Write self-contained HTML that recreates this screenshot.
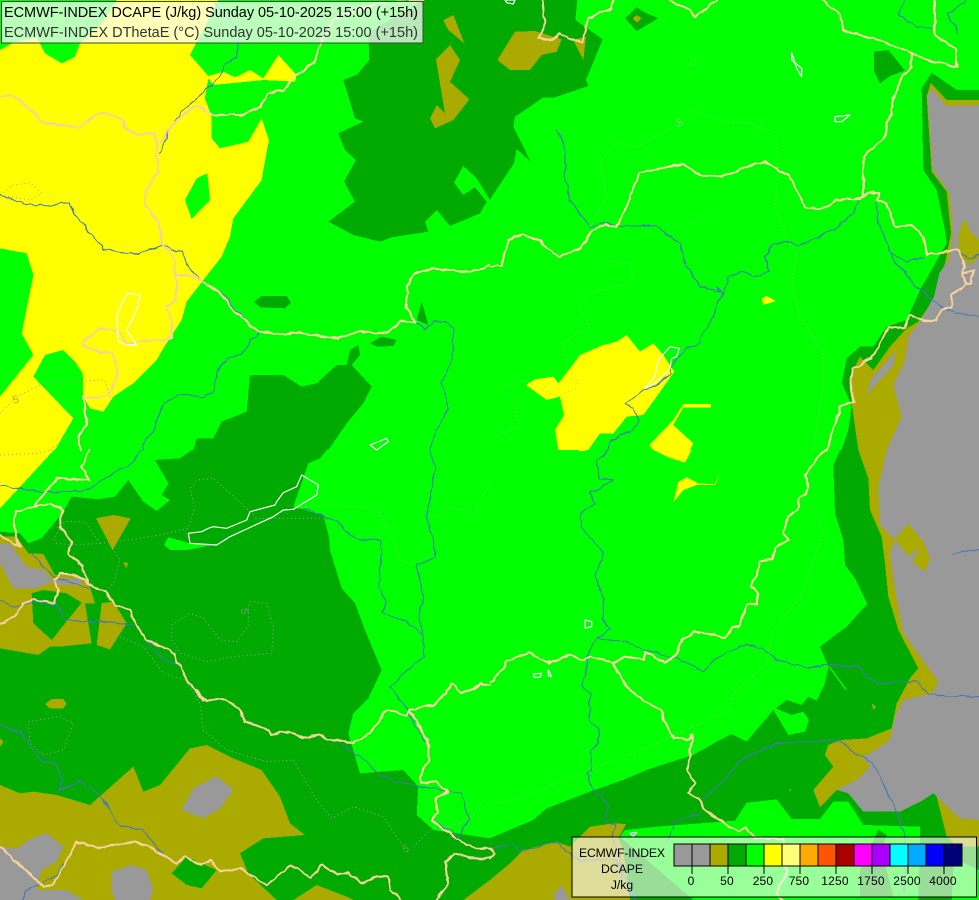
<!DOCTYPE html>
<html><head><meta charset="utf-8"><style>
html,body{margin:0;padding:0;background:#0f0;width:979px;height:900px;overflow:hidden}
svg{display:block}
.f *{shape-rendering:crispEdges}
.Y{fill:#ff0}.D{fill:#0a0}.O{fill:#aa0}.G{fill:#999}.B{fill:#0f0}
.b,.r{filter:url(#wig)}
.b polyline{fill:none;stroke:#f7d39c;stroke-width:6.2;stroke-linejoin:round;stroke-linecap:round}
.r polyline{fill:none;stroke:#4477bb;stroke-width:3.2;stroke-linejoin:round}
.c polyline{fill:none;stroke:#b98fc0;stroke-width:3;stroke-dasharray:3 9}
.c2 polyline{fill:none;stroke:#9ad68f;stroke-width:3;stroke-dasharray:3 9}
.w polygon{fill:none;stroke:#fff;stroke-width:3.6;stroke-linejoin:round}
text{font-family:"Liberation Sans",sans-serif}
</style></head><body>
<svg width="979" height="900" viewBox="0 0 979 900" xmlns="http://www.w3.org/2000/svg">
<defs>
<filter id="wig" filterUnits="userSpaceOnUse" x="-20" y="-20" width="1510" height="1390">
<feTurbulence type="fractalNoise" baseFrequency=".035" numOctaves="2" seed="4" result="n"/>
<feDisplacementMap in="SourceGraphic" in2="n" scale="14" xChannelSelector="R" yChannelSelector="G"/>
</filter>
</defs>
<rect width="979" height="900" fill="#0f0"/>

<!-- TOP LEFT -->
<g transform="scale(.33333)">
<g class="f">
<polygon class="Y" points="0,150 40,128 110,112 120,130 135,160 185,190 225,170 240,130 310,65 350,0 655,0 620,70 570,165 625,228 670,215 705,232 750,210 790,235 835,165 890,225 885,245 790,240 640,255 625,235 615,295 635,350 635,415 660,445 745,425 785,355 807,420 790,510 785,540 700,655 690,710 665,770 610,840 560,905 545,960 490,1045 470,1080 400,1150 340,1190 310,1235 270,1225 250,1190 248,1120 225,1085 190,1050 135,1065 100,1130 220,1255 165,1350 0,1350 0,1190 100,1065 65,1000 100,825 80,760 0,745"/>
<polygon class="B" points="555,600 590,535 622,520 630,600 575,657"/>
<polygon class="D" points="1270,0 1105,100 1108,180 1070,225 1030,240 1065,355 1090,365 1015,400 1035,450 1068,480 1032,545 1065,605 985,665 1060,705 1140,725 1175,712 1285,695 1275,665 1310,630 1350,678 1440,640 1460,605 1425,562 1390,585 1362,548 1390,498 1430,535 1470,600 1470,0"/>
<polygon class="O" points="1330,60 1360,45 1393,130 1345,90"/>
<polygon class="O" points="1308,178 1350,135 1380,180 1350,245 1408,298 1360,360 1305,385 1290,355 1310,315 1335,340"/>
<polygon class="D" points="762,905 785,888 860,888 873,908 855,925 780,922"/>
<polygon class="D" points="1110,1030 1145,1010 1190,1020 1180,1038 1130,1040"/>
<polygon class="D" points="1265,905 1285,975 1250,960"/>
<polygon class="D" points="580,1350 590,1315 640,1315 665,1265 740,1235 750,1127 765,1125 850,1125 905,1160 950,1150 1010,1095 1040,1095 1050,1050 1075,1035 1080,1065 1055,1095 1115,1160 1090,1210 1040,1270 985,1350"/>
</g>
<g class="c"><polyline points="0,585 40,555 90,548 125,580 90,600 0,585"/><polyline points="0,1240 50,1190 130,1150 315,1140 335,1210 320,1225"/><polyline points="150,1350 200,1310 240,1305"/></g>
<g class="r">
<polyline points="0,585 40,600 70,612 125,615 210,610 230,650 270,700 310,745 350,755 415,762 485,735 520,752 550,755 560,795 595,830 605,845 660,875 700,920 730,955 780,1000 760,1015 720,1065 680,1075 650,1120 640,1175 610,1190 540,1185 490,1210 465,1285 430,1330 428,1350"/>
<polyline points="480,460 510,385 545,335 590,295 660,230 675,190 710,170 718,110 690,60 640,5"/>
<polyline points="1200,965 1250,965 1275,990 1300,965 1340,965 1360,990 1355,1080 1325,1150 1345,1225 1310,1290 1290,1350"/>
</g>
<g class="b">
<polyline points="0,290 40,285 80,320 135,370 240,380 285,345 320,340 370,360 375,385 415,405 465,400 475,520 440,565 435,615 475,670 490,740 520,765 525,825 590,830 605,845 650,870 680,905 725,955 780,995 850,1005 880,998 1015,1013 1080,995 1160,1000 1200,965 1250,965 1220,925 1222,860 1240,822 1290,805 1410,815 1470,798"/>
<polyline points="525,825 530,850 525,905 495,920 515,960 515,1015 430,1022 380,1030 355,990 300,985 250,1025 250,1040 340,1065 355,1110 330,1185 285,1195 250,1190 260,1270 235,1310 245,1350"/>
<polyline points="480,430 520,370 590,315 640,345 720,345 780,320 800,285 850,270 890,225 945,185 955,140 1000,60 1040,40 1140,10 1270,0"/>
</g>
<g class="w"><polygon points="1110,1335 1160,1315 1165,1325 1130,1350"/><polygon points="385,880 420,885 410,930 380,990 410,1035 380,1035 355,1025 350,950 370,900"/></g>
</g>

<!-- TOP RIGHT -->
<g transform="translate(490,0) scale(.33333)">
<g class="f">
<polygon class="D" points="0,0 262,0 256,60 338,118 288,240 295,258 195,292 160,292 120,320 75,350 70,380 122,485 80,447 72,490 0,598"/>
<polygon class="O" points="22,180 75,95 135,93 215,118 200,155 155,165 120,210 60,210"/>
<polygon class="O" points="250,120 288,110 280,180"/>
<polygon class="D" points="405,55 440,22 470,40 505,55 440,93"/>
<polygon class="O" points="428,55 440,45 455,55 440,68"/>
<polygon class="D" points="1152,155 1195,150 1245,212 1200,228 1170,250 1152,215"/>
<polygon class="D" points="1470,270 1400,270 1325,218 1295,265 1300,510 1340,570 1365,690 1370,730 1290,870 1250,960 1190,980 1150,1040 1110,1040 1070,1075 1055,1150 1085,1215 1075,1290 1055,1350 1470,1350"/>
<polygon class="O" points="1470,300 1370,300 1322,248 1310,290 1325,515 1370,575 1383,700 1365,790 1335,890 1285,965 1250,985 1200,1040 1150,1110 1110,1070 1080,1130 1085,1210 1105,1350 1470,1350"/>
<polygon class="G" points="1470,315 1370,318 1325,265 1312,290 1328,510 1378,580 1388,700 1378,775 1348,820 1332,890 1290,965 1255,1010 1245,1080 1210,1155 1235,1250 1190,1350 1470,1350"/>
<polygon class="O" points="1425,655 1440,695 1470,720 1470,770 1440,795 1405,760 1405,700"/>
<polygon class="O" points="1255,1010 1245,1080 1210,1155 1235,1250 1190,1350 1105,1350 1085,1210 1128,1185 1180,1130 1215,1055"/>
<polygon class="G" points="1215,1055 1210,1100 1180,1130 1128,1185 1145,1135"/>
<polygon class="Y" points="108,1155 135,1138 190,1130 205,1150 240,1105 270,1065 340,1035 380,1025 410,1005 450,1055 490,1030 520,1065 553,1115 500,1190 460,1245 410,1250 370,1300 330,1300 295,1350 205,1350 195,1290 222,1245 210,1190 170,1200"/>
<polygon class="Y" points="478,1335 550,1260 580,1212 663,1212 663,1222 580,1222 550,1275 610,1330 600,1350 490,1350"/>
<polygon class="Y" points="815,895 830,888 858,903 820,915"/>
</g>
<g class="c2">
<polyline points="570,370 440,440 380,425 330,490 350,590 300,680"/>
<polyline points="600,330 700,365 780,370 855,395 865,480 855,630 920,770 905,850 930,950 1000,1060 1000,1150 970,1350"/>
<polyline points="330,780 420,790 430,850 290,880 270,920 300,980 215,1030 235,1100"/>
<polyline points="40,1170 100,1140 200,1190 270,1160 240,1110"/>
<polyline points="70,1200 90,1280 0,1315"/>
<polyline points="590,170 620,175 610,200 590,190"/>
<polyline points="605,670 670,650"/>
</g>
<g class="r">
<polyline points="200,390 225,440 225,540 240,600 300,680 340,668 390,678 495,678 570,730 580,780 630,860 690,875 680,860 700,880 715,830 760,815 795,830 835,815 825,770 845,735 900,725 925,740 1030,690 1090,640 1105,600"/>
<polyline points="700,880 680,905 670,950 640,1000 630,1030 590,1045 545,1100 540,1120 495,1160 460,1170 405,1212 430,1225 445,1270 420,1300 390,1300 360,1330 355,1350"/>
<polyline points="1160,610 1165,670 1190,725 1210,780 1290,870 1355,920 1400,940 1470,950"/>
<polyline points="1205,760 1250,785 1300,770"/>
<polyline points="1405,760 1440,775 1470,765"/>
<polyline points="1240,0 1225,45 1280,80 1330,85"/>
<polyline points="1430,0 1375,40 1380,65 1400,80 1397,100"/>
</g>
<g class="b">
<polyline points="0,800 35,795 55,720 95,705 150,720 170,745 210,770 270,745 305,695 345,675 375,680 410,620 445,520 580,490 630,525 690,530 740,515 775,498 825,485 900,530 945,620 990,628 1040,600 1110,597 1140,575 1165,580 1160,600 1190,610 1215,680 1265,675 1300,710 1310,765 1400,750 1425,800 1415,825 1430,850 1385,885 1385,920 1355,930 1340,960 1300,965 1260,945 1245,985 1195,980 1145,1075 1090,1105 1080,1150 1090,1205 1050,1220 1020,1320 1010,1350"/>
<polyline points="1120,590 1120,470 1190,405 1190,365 1205,340 1210,290 1240,225 1265,200 1265,160 1330,185 1400,200 1395,145 1335,105 1335,0"/>
<polyline points="1265,160 1190,130 1130,110 1060,90 1050,45 1000,0"/>
<polyline points="370,0 365,25 295,55 275,130 210,100 190,120 145,115 165,70 155,0"/>
<polyline points="540,0 600,30 615,50 680,0"/>
<polyline points="1430,850 1445,850 1450,810 1420,820"/>
</g>
<g class="w">
<polygon points="905,158 905,180 935,205 935,230 920,205"/>
<polygon points="1035,350 1080,345 1055,365 1035,365"/>
<polygon points="45,0 75,0 70,12 50,8"/>
<polygon points="540,1040 568,1045 560,1070 545,1075 540,1105 495,1150 465,1165 495,1130 505,1080"/>
</g>
</g>

<!-- BOTTOM LEFT -->
<g transform="translate(0,450) scale(.33333)">
<g class="f">
<polygon class="Y" points="0,0 162,0 70,100 0,175"/>
<polygon class="D" points="575,0 540,25 465,30 505,100 485,135 510,150 470,183 430,155 385,90 345,140 295,148 215,140 190,185 125,265 85,280 60,250 0,245 0,1350 1470,1350 1470,1165 1300,1140 1250,1095 1255,1010 1210,960 1080,970 1045,850 1060,790 1105,745 1145,660 1095,540 1065,460 1025,415 990,300 987,260 970,195 880,170 925,40 960,25 980,0"/>
<polygon class="B" points="492,285 505,262 570,280 640,285 560,300 510,300"/>
<polygon class="O" points="0,260 50,260 85,310 130,312 165,375 230,375 265,395 285,460 255,460 275,580 180,590 150,590 115,615 0,595"/>
<polygon class="D" points="95,430 130,420 200,430 245,458 155,570 100,520"/>
<polygon class="O" points="305,460 340,455 380,520 330,598 290,585"/>
<polygon class="O" points="288,205 340,195 392,205 338,300"/>
<polygon class="O" points="370,335 385,340 378,355"/>
<polygon class="O" points="135,762 155,747 190,747 200,762 190,775 150,775"/>
<polygon class="O" points="0,865 10,875 0,890"/>
<polygon class="G" points="0,280 30,280 80,350 130,360 160,395 110,415 40,415 0,340"/>
<polygon class="G" points="160,385 245,385 245,405 160,405"/>
<polygon class="O" points="0,1005 60,1030 100,1025 170,1035 270,1065 400,950 430,1025 480,1005 570,895 620,885 700,925 785,960 840,1040 870,1120 915,1155 790,1165 720,1210 745,1270 830,1350 0,1350"/>
<polygon class="D" points="515,1270 560,1220 650,1260 605,1315 560,1305"/>
<polygon class="G" points="545,1080 580,1015 650,978 700,1020 660,1075 610,1105"/>
<polygon class="G" points="0,1190 50,1195 95,1165 140,1150 190,1190 170,1235 125,1260 110,1320 200,1320 250,1350 0,1350"/>
<polygon class="G" points="335,1265 395,1245 440,1260 460,1320 450,1350 345,1350 335,1320"/>
<polygon class="O" points="880,1350 950,1305 1040,1340 1060,1350"/>
<polygon class="O" points="1390,1350 1470,1290 1470,1350"/>
</g>
<g class="c">
<polyline points="0,15 110,10 160,0"/>
<polyline points="170,280 160,265 195,215 255,215 300,280 220,285 170,280"/>
<polyline points="300,280 380,270 480,255 565,235 585,170 570,120 590,90 640,85 740,175 770,205 880,205 960,205"/>
<polyline points="330,285 360,330 340,400 320,420"/>
<polyline points="750,455 800,460 820,530 815,610 700,620 620,635 540,610 515,570 515,525 570,490 610,505 660,570 710,575 745,530 745,470 750,455"/>
<polyline points="85,815 180,800 220,820 190,900 130,915 90,880 85,815"/>
<polyline points="360,560 430,590 490,670 555,690 600,760 610,840 680,900 800,935 880,930 950,1050 995,1105 1060,1070 1150,1100 1210,1190"/>
<polyline points="1240,1190 1290,1140 1380,1120"/>
</g>
<g class="c2">
<polyline points="880,175 985,165 1130,175 1180,270 1200,330 1245,345"/>
<polyline points="1300,200 1350,170 1420,190 1470,100"/>
<polyline points="1380,1120 1470,1060"/>
</g>
<g class="r">
<polyline points="1290,0 1305,55 1280,200 1305,285 1305,320 1250,345 1270,440 1255,500 1270,550 1270,620 1170,710 1220,775 1240,820 1285,880"/>
<polyline points="425,0 400,35 340,70 260,120 130,128 0,105"/>
<polyline points="910,175 1015,215 1050,255 1085,272 1140,270 1145,310 1135,410 1160,450 1145,487 1220,515 1270,555"/>
<polyline points="0,450 35,470 105,455 170,465 195,510 270,515 330,515 410,525"/>
<polyline points="95,310 160,380 270,415"/>
<polyline points="440,570 480,620 530,645"/>
<polyline points="0,822 60,850 125,930 170,945 185,990 180,1020 240,995 300,1035 360,1130 430,1140 470,1190 500,1225 530,1240"/>
<polyline points="190,1240 170,1275 80,1320 70,1350"/>
<polyline points="1020,880 1085,925 1140,975 1190,995 1330,1020 1385,1030 1405,1110 1380,1160 1290,1105"/>
</g>
<g class="b">
<polyline points="0,520 40,500 70,460 100,450 165,458 175,420 160,390 180,370 230,375 270,405 320,425 345,465 390,480 410,530 440,568 525,610 530,640 545,650 560,690 600,740 620,755 640,745 690,755 720,780 735,815 795,835 815,858 840,847 870,847 910,862 960,855 1000,872 1040,872 1060,880 1110,850 1160,778 1220,795 1225,780 1300,765 1335,735 1355,700 1380,725 1420,720 1440,700 1470,705"/>
<polyline points="270,0 245,50 268,90 170,85 100,170 45,185 40,235 60,290"/>
<polyline points="100,170 150,160 190,180 178,230 215,275 205,310 245,350 265,400"/>
<polyline points="0,255 30,270 60,290"/>
<polyline points="1225,780 1285,870 1285,930 1260,985 1265,1000 1310,995 1345,1025 1305,1045 1315,1090 1295,1110 1350,1150 1400,1185 1430,1195 1470,1195"/>
<polyline points="1470,1225 1420,1225 1360,1210 1335,1240 1345,1300 1310,1350"/>
<polyline points="0,1190 130,1310 160,1305 230,1175 300,1195 400,1175 440,1185 530,1240 555,1220 600,1245 630,1230 660,1265 720,1255 800,1305 875,1245 930,1285 965,1245 1010,1270 1045,1270 1085,1300 1130,1280 1165,1280 1170,1320 1205,1350"/>
<polyline points="590,725 610,750" style="stroke-width:12"/>
</g>
<g class="w"><polygon points="565,250 605,245 625,235 640,230 680,235 740,210 750,185 825,165 830,155 850,128 890,110 905,75 955,105 950,135 880,178 850,180 820,200 690,260 650,285 570,280"/></g>
</g>

<!-- BOTTOM RIGHT -->
<g transform="translate(490,450) scale(.33333)">
<g class="f">
<polygon class="Y" points="490,0 605,0 585,38 530,20"/>
<polygon class="Y" points="265,0 290,0 285,3 268,3"/>
<polygon class="Y" points="550,158 565,95 590,82 625,100 672,103 692,70 675,105 620,105 580,120"/>
<polygon class="D" points="1050,0 1030,45 1035,190 1060,270 1065,345 1095,385 1132,462 1070,530 990,590 1015,650 1005,700 980,752 955,740 935,765 890,750 857,775 905,795 940,785 957,810 945,845 895,855 850,780 770,875 725,852 680,875 610,915 530,940 470,960 400,990 300,1025 170,1075 130,1110 70,1135 0,1165 0,1350 1470,1350 1470,0"/>
<polygon class="B" points="405,1140 500,1130 735,1112 770,1058 860,1048 905,1107 990,1107 1030,1055 1075,1055 1120,1125 1290,1130 1290,1190 1285,1350 610,1350 390,1160"/>
<polygon class="D" points="1165,1138 1190,1155 1175,1200 1210,1340 1110,1340 1110,1260"/>
<polygon class="B" points="1392,1225 1470,1262 1470,1350 1385,1350"/>
<polygon class="O" points="0,1290 60,1240 100,1200 200,1175 240,1190 300,1130 370,1120 408,1122 385,1165 400,1200 420,1350 0,1350"/>
<polygon class="G" points="190,1335 215,1305 240,1350 195,1350"/>
<polygon class="O" points="1105,0 1135,85 1140,180 1175,260 1185,340 1195,440 1225,540 1285,655 1260,685 1220,760 1205,835 1130,865 1050,870 1015,885 1005,915 1030,950 970,1020 990,1072 1040,1020 1075,1030 1120,1085 1230,1085 1300,1050 1330,1030 1410,1100 1470,1110 1470,0"/>
<polygon class="G" points="1190,0 1165,110 1170,225 1215,270 1200,310 1215,420 1240,550 1345,695 1325,730 1240,750 1215,800 1200,870 1140,910 1115,920 1140,950 1100,990 1040,1020 1075,1030 1120,1085 1230,1085 1300,1050 1330,1030 1410,1110 1470,1110 1470,0"/>
<polygon class="O" points="1215,268 1255,220 1300,275 1320,325 1305,365 1268,335 1290,290 1255,318"/>
<polygon class="O" points="1340,1040 1370,1160 1470,1160 1470,1110 1410,1105"/>
<polygon class="O" points="1370,1160 1470,1160 1470,1190 1400,1190"/>
<polygon class="O" points="1145,760 1158,770 1150,780"/>
<polygon class="O" points="899,1017 903,1017 903,1023 899,1023"/>
<polygon class="B" points="1015,650 1020,650 1072,720 1065,718"/>
</g>
<g class="c2">
<polyline points="970,180 1000,250 960,360 930,440 850,540 830,640 730,730 720,780 500,880 300,960 100,1040 0,1065"/>
</g>
<g class="r">
<polyline points="355,0 320,35 330,85 370,90 300,130 315,160 270,190 275,230 340,310 315,380 340,440 340,510 358,540 320,565 290,620 290,650 275,710 300,730 300,815 325,835 325,880 300,900 305,960 290,965 305,1015 355,1065 345,1110 375,1130 365,1160 385,1200 395,1300 440,1350"/>
<polyline points="320,565 400,575 465,600 560,625 640,665 680,625 770,580 820,600 860,630 960,655 1000,645 1100,650 1160,700 1280,695 1320,735 1470,740"/>
<polyline points="1387,310 1470,298"/>
<polyline points="0,1195 70,1185 90,1205 200,1175 245,1220 270,1230 380,1230 440,1350"/>
<polyline points="630,1095 560,1110 530,1180"/>
<polyline points="640,1050 720,970 750,930 860,880 1050,870 1090,905 1150,940 1210,1060 1245,1160 1245,1330"/>
</g>
<g class="b">
<polyline points="1005,0 975,35 945,75 955,115 925,150 925,180 895,200 880,250 895,270 855,295 850,325 810,335 800,375 785,410 805,430 800,460 770,465 750,530 725,535 705,565 650,550 610,545 575,570 560,615 525,638 465,605 460,630 405,620 370,640 340,628 300,620 280,630 240,615 180,640 115,607 50,635 45,655 0,695"/>
<polyline points="370,645 410,710 460,750 510,780 520,805 550,865 590,870 605,855 600,920 590,960 615,1000 595,1030 630,1045 640,1075 715,1130 750,1145 765,1130 790,1165 880,1165 890,1270 860,1330 880,1350"/>
<polyline points="0,1195 12,1210 0,1225"/>
</g>
<g class="w">
<polygon points="285,510 305,515 305,530 285,535"/>
<polygon points="130,672 155,670 150,682 132,682"/>
<polygon points="175,660 185,680 175,678"/>
<polygon points="420,1150 440,1147 430,1160"/>
</g>
</g>

<!-- contour labels -->
<g fill="#6f9a6f" font-size="11">
<text x="0" y="0" transform="translate(241,608) rotate(90)">5</text>
<text x="0" y="0" transform="translate(404,853) rotate(-20)">5</text>
<text x="0" y="0" transform="translate(14,404) rotate(-20)" fill="#b9a24a">5</text>
<text x="0" y="0" transform="translate(678,127) rotate(-20)" fill="#7bd46b">5</text>
</g>

<!-- title -->
<rect x="1.5" y="1.5" width="421.5" height="41.5" fill="#fff" fill-opacity=".73" stroke="#2f4f2f" stroke-width="1"/>
<text x="4" y="17" font-size="14.5" fill="#000" textLength="414" lengthAdjust="spacing">ECMWF-INDEX DCAPE (J/kg) Sunday 05-10-2025 15:00 (+15h)</text>
<text x="4" y="37" font-size="14.5" fill="#333" textLength="414" lengthAdjust="spacing">ECMWF-INDEX DThetaE (°C) Sunday 05-10-2025 15:00 (+15h)</text>

<!-- legend -->
<rect x="572" y="837" width="404.5" height="60" fill="#fff" fill-opacity=".6" stroke="#000" stroke-width="1"/>
<g font-size="12.2" fill="#000" text-anchor="middle">
<text x="622" y="857" textLength="86" lengthAdjust="spacing">ECMWF-INDEX</text>
<text x="622" y="873">DCAPE</text>
<text x="622" y="889">J/kg</text>
</g>
<g stroke="#000" stroke-width="1" shape-rendering="crispEdges">
<rect x="674" y="844" width="18" height="22" fill="#999"/>
<rect x="692" y="844" width="18" height="22" fill="#999"/>
<rect x="710" y="844" width="18" height="22" fill="#aa0"/>
<rect x="728" y="844" width="18" height="22" fill="#0a0"/>
<rect x="746" y="844" width="18" height="22" fill="#0f0"/>
<rect x="764" y="844" width="18" height="22" fill="#ff0"/>
<rect x="782" y="844" width="18" height="22" fill="#ff7"/>
<rect x="800" y="844" width="18" height="22" fill="#fa0"/>
<rect x="818" y="844" width="18" height="22" fill="#f50"/>
<rect x="836" y="844" width="18" height="22" fill="#a00"/>
<rect x="854" y="844" width="18" height="22" fill="#f0f"/>
<rect x="872" y="844" width="18" height="22" fill="#a0f"/>
<rect x="890" y="844" width="18" height="22" fill="#0ff"/>
<rect x="908" y="844" width="18" height="22" fill="#0af"/>
<rect x="926" y="844" width="18" height="22" fill="#00f"/>
<rect x="944" y="844" width="18" height="22" fill="#007"/>
<path d="M692 866v8M728 866v8M764 866v8M800 866v8M836 866v8M872 866v8M908 866v8M944 866v8" fill="none"/>
</g>
<g font-size="12" fill="#000" text-anchor="middle" letter-spacing=".2">
<text x="691" y="885">0</text>
<text x="727" y="885">50</text>
<text x="763" y="885">250</text>
<text x="799" y="885">750</text>
<text x="835" y="885">1250</text>
<text x="871" y="885">1750</text>
<text x="907" y="885">2500</text>
<text x="943" y="885">4000</text>
</g>
</svg>
</body></html>
